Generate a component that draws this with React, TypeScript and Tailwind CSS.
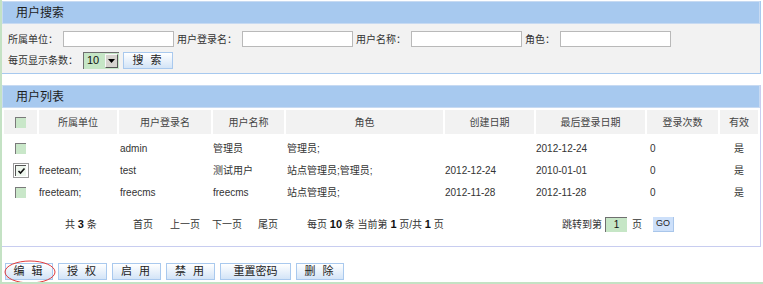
import type { ReactNode } from "react";

const FONT = '"Liberation Sans", "Noto Sans CJK SC", sans-serif';

function Box({ checked = false }: { checked?: boolean }) {
  if (checked) {
    return (
      <span className="inline-flex h-[15px] w-[16px] items-center justify-center border border-[#9a9a9a] bg-white">
        <span className="relative flex h-[11px] w-[11px] items-center justify-center border-l border-t border-[#555] border-b-[#eee] border-r-[#eee] bg-[#eef7ee]">
          <svg width="9" height="8" viewBox="0 0 9 8">
            <path d="M1.5 4 L3.5 6 L7.5 1.5" fill="none" stroke="#111" strokeWidth="1.6" />
          </svg>
        </span>
      </span>
    );
  }
  return (
    <span className="inline-block h-[11px] w-[11px] border-l border-t border-[#7a7a7a] border-b-[#f4f4f4] border-r-[#f4f4f4] bg-[#c9e7c9]" />
  );
}

function Field({ label, w = "w-[111px]" }: { label: string; w?: string }) {
  return (
    <div className="flex items-center">
      <span className="mr-[5px]">{label}</span>
      <span className={`h-[16px] ${w} border border-[#b9b9b9] bg-white`} />
    </div>
  );
}

function Btn({ children, w, wide = true }: { children: ReactNode; w: string; wide?: boolean }) {
  return (
    <button
      className={`${w} ${wide ? "tracking-[2px]" : "tracking-normal"} h-[17px] shrink-0 border border-[#a9c9ee] bg-gradient-to-b from-white to-[#d3e4f7] text-[11px] leading-none text-[#222]`}
    >
      {children}
    </button>
  );
}

function Head({ title }: { title: string }) {
  return (
    <div className="flex h-[23px] items-center border border-[#c7daf2] bg-[#a7c9ef] pl-[13px] text-[12px] text-[#1c1c1c]">
      {title}
    </div>
  );
}

const rows = [
  { cb: false, unit: "", login: "admin", name: "管理员", role: "管理员;", created: "", last: "2012-12-24" },
  { cb: true, unit: "freeteam;", login: "test", name: "测试用户", role: "站点管理员;管理员;", created: "2012-12-24", last: "2010-01-01" },
  { cb: false, unit: "freeteam;", login: "freecms", name: "freecms", role: "站点管理员;", created: "2012-11-28", last: "2012-11-28" },
];

export default function App() {
  return (
    <div
      className="relative h-[284px] w-[763px] overflow-hidden border-b-2 border-l-2 border-[#c4e2c4] bg-white pt-[1px] text-[10px] text-[#333]"
      style={{ fontFamily: FONT }}
    >
      {/* search panel */}
      <div className="mr-[2px] border-b border-r border-[#a7c9ef]">
        <Head title="用户搜索" />
        <div className="bg-[#f2f2f2] pb-[4px] pl-[6px] pt-[7px]">
          <div className="flex items-center gap-[3px]">
            <Field label="所属单位：" />
            <Field label="用户登录名：" />
            <Field label="用户名称：" />
            <Field label="角色：" />
          </div>
          <div className="mt-[5px] flex items-center">
            <span className="mr-[5px]">每页显示条数：</span>
            <span className="flex h-[17px] w-[36px] border-l border-t border-[#6f6f6f] border-b-[#e6e6e6] border-r-[#e6e6e6] bg-[#c6e6c6]">
              <span className="flex-1 pl-[3px] text-[11px] leading-[15px] text-[#111]">10</span>
              <span className="my-[1px] mr-[1px] flex w-[13px] items-center justify-center border border-[#f8f8f8] border-b-[#555] border-r-[#555] bg-[#d6d3ce]">
                <svg width="7" height="4" viewBox="0 0 7 4">
                  <path d="M0 0 L7 0 L3.5 4 Z" fill="#000" />
                </svg>
              </span>
            </span>
            <span className="ml-[4px]">
              <Btn w="w-[50px]">搜 索</Btn>
            </span>
          </div>
        </div>
      </div>

      {/* list panel */}
      <div className="mr-[2px] mt-[11px] border-b border-r border-[#c8cdf0]">
        <Head title="用户列表" />
        <table className="w-[758px] table-fixed border-separate border-spacing-[2px]">
          <thead>
            <tr className="h-[24px] bg-[#f2f2f2] font-normal text-[#444]">
              <th className="w-[33px] font-normal">
                <span className="flex justify-center">
                  <Box />
                </span>
              </th>
              <th className="w-[78px] font-normal">所属单位</th>
              <th className="w-[92px] font-normal">用户登录名</th>
              <th className="w-[71px] font-normal">用户名称</th>
              <th className="w-[157px] font-normal">角色</th>
              <th className="w-[89px] font-normal">创建日期</th>
              <th className="w-[109px] font-normal">最后登录日期</th>
              <th className="w-[71px] font-normal">登录次数</th>
              <th className="w-[38px] font-normal">有效</th>
            </tr>
          </thead>
          <tbody>
            {rows.map((r, i) => (
              <tr key={i} className={i === 0 ? "h-[22px]" : "h-[20px]"}>
                <td className={i === 0 ? "pt-[2px]" : ""}>
                  <span className="flex justify-center">
                    <Box checked={r.cb} />
                  </span>
                </td>
                <td className={i === 0 ? "pt-[2px]" : ""}>{r.unit}</td>
                <td className={i === 0 ? "pl-[1px] pt-[2px]" : "pl-[1px]"}>{r.login}</td>
                <td className={i === 0 ? "pt-[2px]" : ""}>{r.name}</td>
                <td className={i === 0 ? "pl-[1px] pt-[2px]" : "pl-[1px]"}>{r.role}</td>
                <td className={i === 0 ? "pt-[2px]" : ""}>{r.created}</td>
                <td className={i === 0 ? "pt-[2px]" : ""}>{r.last}</td>
                <td className={i === 0 ? "pl-[3px] pt-[2px]" : "pl-[3px]"}>0</td>
                <td className={i === 0 ? "pt-[2px] text-center" : "text-center"}>是</td>
              </tr>
            ))}
            <tr className="h-[40px]">
              <td colSpan={9}>
                <div className="flex items-center pl-[61px]">
                  <span className="w-[68px] shrink-0">
                    共 <b className="text-[11px] text-[#111]">3</b> 条
                  </span>
                  <span className="w-[37px] shrink-0">首页</span>
                  <span className="w-[42px] shrink-0">上一页</span>
                  <span className="w-[46px] shrink-0">下一页</span>
                  <span className="w-[49px] shrink-0">尾页</span>
                  <span className="w-[255px] shrink-0">
                    每页 <b className="text-[11px] text-[#111]">10</b> 条 当前第 <b className="text-[11px] text-[#111]">1</b> 页/共{" "}
                    <b className="text-[11px] text-[#111]">1</b> 页
                  </span>
                  <span className="w-[43px] shrink-0">跳转到第</span>
                  <span className="flex h-[15px] w-[22px] shrink-0 items-center justify-center border-l border-t border-[#6f6f6f] border-b-[#dcdcdc] border-r-[#dcdcdc] bg-[#c6e6c6] text-[10px] text-[#111]">
                    1
                  </span>
                  <span className="ml-[5px] w-[21px] shrink-0">页</span>
                  <span className="flex h-[15px] w-[21px] shrink-0 items-center justify-center border-b border-r border-[#a9c6ea] bg-[#cde0fa] text-[9px] text-[#222]">
                    GO
                  </span>
                </div>
              </td>
            </tr>
          </tbody>
        </table>
      </div>

      {/* action buttons */}
      <div className="ml-[3px] mt-[16px] flex gap-[5px]">
        <Btn w="w-[48px]">编 辑</Btn>
        <Btn w="w-[49px]">授 权</Btn>
        <Btn w="w-[49px]">启 用</Btn>
        <Btn w="w-[49px]">禁 用</Btn>
        <Btn w="w-[71px]" wide={false}>重置密码</Btn>
        <Btn w="w-[48px]">删 除</Btn>
      </div>

      {/* red annotation ellipse */}
      <svg className="absolute left-[2px] top-[260px]" width="52" height="24" viewBox="0 0 52 24">
        <ellipse cx="26" cy="12" rx="25" ry="11" fill="none" stroke="#e23b3b" strokeWidth="1" />
      </svg>
    </div>
  );
}
